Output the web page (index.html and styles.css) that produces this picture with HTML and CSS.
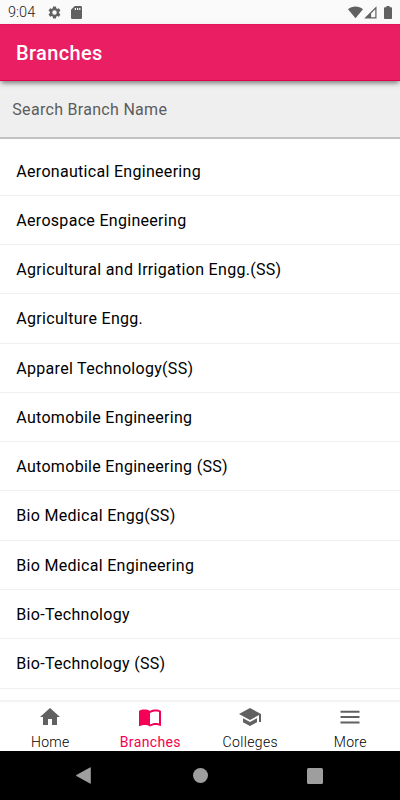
FILE: index.html
```html
<!DOCTYPE html>
<html lang="en">
<head>
<meta charset="utf-8">
<title>Branches</title>
<link rel="stylesheet" href="styles.css">
</head>
<body>
<div class="status">
  <span class="clock">9:04</span>
  <svg class="gear" viewBox="0 0 24 24"><path d="M19.14 12.94c.04-.3.06-.61.06-.94s-.02-.64-.07-.94l2.03-1.58a.5.5 0 0 0 .12-.61l-1.92-3.32a.49.49 0 0 0-.59-.22l-2.39.96a7 7 0 0 0-1.62-.94l-.36-2.54a.48.48 0 0 0-.48-.41h-3.84a.47.47 0 0 0-.47.41l-.36 2.54c-.59.24-1.13.57-1.62.94l-2.39-.96a.48.48 0 0 0-.59.22L2.74 8.87a.48.48 0 0 0 .12.61l2.03 1.58c-.05.3-.09.63-.09.94s.02.64.07.94l-2.03 1.58a.5.5 0 0 0-.12.61l1.92 3.32c.12.22.37.29.59.22l2.39-.96c.5.38 1.03.7 1.62.94l.36 2.54c.05.24.24.41.48.41h3.84c.24 0 .44-.17.47-.41l.36-2.54c.59-.24 1.13-.56 1.62-.94l2.39.96c.22.08.47 0 .59-.22l1.92-3.32a.48.48 0 0 0-.12-.61zM12 15.6a3.6 3.6 0 1 1 0-7.2 3.6 3.6 0 0 1 0 7.2z"/></svg>
  <svg class="sd" viewBox="0 0 11 13"><path fill-rule="evenodd" d="M3.7 0H9.8Q11 0 11 1.2V11.8Q11 13 9.8 13H1.2Q0 13 0 11.8V3.7ZM3.8 2V4H5V2ZM6 2V4H7.2V2ZM8.2 2V4H9.4V2Z"/></svg>
  <span class="spacer"></span>
  <svg class="wifi" viewBox="0 0 16 13"><path d="M0 3.1C4.5-.9 11.5-.9 16 3.1L8 12.5Z"/></svg>
  <svg class="signal" viewBox="0 0 13 13"><path fill-rule="evenodd" d="M12.5.2V12.5H.2ZM11.3 3.2L7.1 7.4V11.3H11.3Z"/></svg>
  <svg class="battery" viewBox="0 0 8 13"><path d="M2.4 0H5.6V1.2H7.2Q8 1.2 8 2V12.2Q8 13 7.2 13H.8Q0 13 0 12.2V2Q0 1.2.8 1.2H2.4Z"/></svg>
</div>
<header class="bar"><h1>Branches</h1></header>
<div class="search">Search Branch Name</div>
<ul class="list">
  <li>Aeronautical Engineering</li>
  <li>Aerospace Engineering</li>
  <li>Agricultural and Irrigation Engg.(SS)</li>
  <li>Agriculture Engg.</li>
  <li>Apparel Technology(SS)</li>
  <li>Automobile Engineering</li>
  <li>Automobile Engineering (SS)</li>
  <li>Bio Medical Engg(SS)</li>
  <li>Bio Medical Engineering</li>
  <li>Bio-Technology</li>
  <li>Bio-Technology (SS)</li>
</ul>
<nav class="tabs">
  <a class="tab"><svg viewBox="0 0 24 24"><path d="M10 20v-6h4v6h5v-8h3L12 3 2 12h3v8z"/></svg><span>Home</span></a>
  <a class="tab active"><svg viewBox="0 0 24 24"><path d="M21 5c-1.11-.35-2.33-.5-3.5-.5-1.95 0-4.05.4-5.5 1.5-1.45-1.1-3.55-1.5-5.5-1.5S2.45 4.9 1 6v14.65c0 .25.25.5.5.5.1 0 .15-.05.25-.05C3.1 20.45 5.05 20 6.5 20c1.95 0 4.05.4 5.5 1.5 1.35-.85 3.8-1.5 5.5-1.5 1.65 0 3.35.3 4.75 1.05.1.05.15.05.25.05.25 0 .5-.25.5-.5V6c-.6-.45-1.25-.75-2-1zm0 13.5c-1.1-.35-2.3-.5-3.5-.5-1.7 0-4.15.65-5.5 1.5V8c1.35-.85 3.8-1.5 5.5-1.5 1.2 0 2.4.15 3.5.5z"/></svg><span>Branches</span></a>
  <a class="tab"><svg viewBox="0 0 24 24"><path d="M5 13.18v4L12 21l7-3.82v-4L12 17zM12 3 1 9l11 6 9-4.91V17h2V9z"/></svg><span>Colleges</span></a>
  <a class="tab"><svg viewBox="0 0 24 24"><path d="M2.5 18.5h19v-2h-19zm0-5.4h19v-2h-19zm0-7.4v2h19v-2z"/></svg><span>More</span></a>
</nav>
<div class="system">
  <svg class="back" viewBox="0 0 15 17"><path d="M14.8.8V16.2Q14.8 17 14 16.6L.4 9Q-.2 8.5.4 8L14 .4Q14.8 0 14.8.8Z"/></svg>
  <span class="home"></span>
  <span class="recent"></span>
</div>
</body>
</html>
```

FILE: styles.css
```css
* { box-sizing: border-box; }
body {
  margin: 0;
  width: 400px;
  height: 800px;
  overflow: hidden;
  display: flex;
  flex-direction: column;
  background: #fff;
  color: #000;
  font-family: Roboto, "Liberation Sans", sans-serif;
}
svg { display: block; fill: #616161; flex: none; }
.status {
  height: 24.4px;
  flex: none;
  display: flex;
  align-items: center;
  padding: 1px 8px 0;
  background: #fafafa;
}
.clock { width: 38.5px; font-size: 14.5px; font-weight: 300; color: #222; }
.gear { width: 15px; height: 15px; margin-right: 9.5px; }
.sd { width: 11px; height: 13px; }
.spacer { flex: 1; }
.wifi { width: 15px; height: 13px; margin-right: 1.5px; }
.signal { width: 13px; height: 13px; margin-right: 7px; }
.battery { width: 8px; height: 13px; }
.bar {
  height: 56.6px;
  flex: none;
  display: flex;
  align-items: center;
  padding-left: 16px;
  background: #e91e63;
  border-top: 1px solid #e5175d;
  border-bottom: 1px solid #e00050;
  box-shadow: 0 3px 5px -1px rgba(0, 0, 0, .5);
  z-index: 1;
}
h1 { margin: 0; font-size: 20px; font-weight: 500; letter-spacing: .35px; color: #fff; }
.search {
  height: 58px;
  flex: none;
  padding-left: 12.3px;
  line-height: 58px;
  font-size: 16px;
  letter-spacing: .3px;
  color: #5c5c5c;
  background: #efefef;
  border-bottom: 2px solid #c2c2c2;
}
.list {
  list-style: none;
  margin: 0;
  padding: 7.6px 0 0;
  flex: 1;
  min-height: 0;
}
.list li {
  height: 49.27px;
  padding-left: 16.3px;
  line-height: 49.6px;
  font-size: 16px;
  letter-spacing: .3px;
  border-bottom: 1px solid #efefef;
}
.tabs {
  height: 51px;
  flex: none;
  display: flex;
  background: #fff;
  border-top: 2px solid #f3f3f3;
}
.tab {
  flex: 1;
  display: flex;
  flex-direction: column;
  align-items: center;
  padding-top: 3px;
  font-size: 14px;
  font-weight: 300;
  color: #000;
}
.tab svg { width: 24px; height: 24px; }
.tab span { line-height: 16px; margin-top: 5px; padding-left: .6px; letter-spacing: .35px; }
.tab.active { color: #f50050; font-weight: 400; }
.active svg { fill: #f50057; }
.system {
  height: 49px;
  flex: none;
  display: flex;
  align-items: center;
  padding-left: 76px;
  background: #000;
}
.system svg { fill: #9e9e9e; }
.back { width: 15px; height: 17px; }
.home { width: 15px; height: 15px; margin-left: 101.5px; border-radius: 50%; background: #9e9e9e; }
.recent { width: 16px; height: 16px; margin-left: 99.5px; border-radius: 1.5px; background: #9e9e9e; }
```
